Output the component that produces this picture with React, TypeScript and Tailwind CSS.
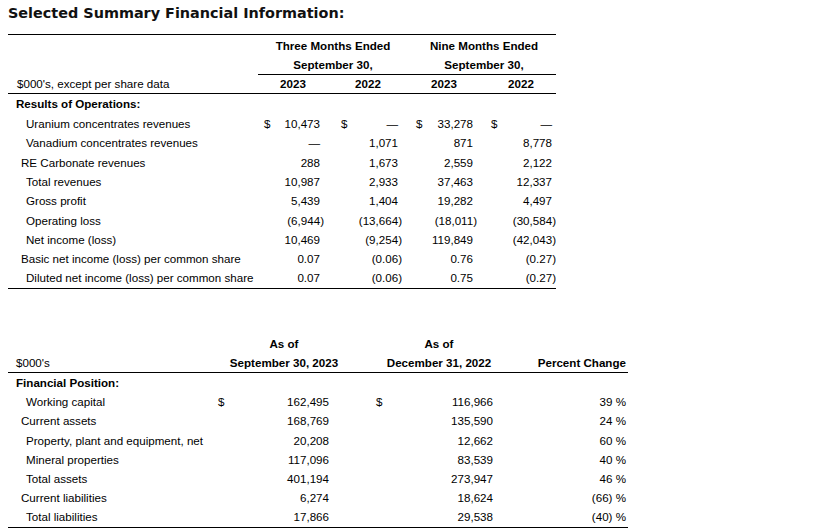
const ops = [
  { label: 'Uranium concentrates revenues', indent: 'pl-[18px]', v: ['10,473', '—', '33,278', '—'], dollar: true },
  { label: 'Vanadium concentrates revenues', indent: 'pl-[18px]', v: ['—', '1,071', '871', '8,778'] },
  { label: 'RE Carbonate revenues', indent: 'pl-[13px]', v: ['288', '1,673', '2,559', '2,122'] },
  { label: 'Total revenues', indent: 'pl-[18px]', v: ['10,987', '2,933', '37,463', '12,337'] },
  { label: 'Gross profit', indent: 'pl-[18px]', v: ['5,439', '1,404', '19,282', '4,497'] },
  { label: 'Operating loss', indent: 'pl-[18px]', v: ['(6,944)', '(13,664)', '(18,011)', '(30,584)'] },
  { label: 'Net income (loss)', indent: 'pl-[18px]', v: ['10,469', '(9,254)', '119,849', '(42,043)'] },
  { label: 'Basic net income (loss) per common share', indent: 'pl-[13px]', v: ['0.07', '(0.06)', '0.76', '(0.27)'] },
  { label: 'Diluted net income (loss) per common share', indent: 'pl-[18px]', v: ['0.07', '(0.06)', '0.75', '(0.27)'] },
];

const position = [
  { label: 'Working capital', indent: 'pl-[18px]', a: '162,495', b: '116,966', p: '39 %', dollar: true },
  { label: 'Current assets', indent: 'pl-[13px]', a: '168,769', b: '135,590', p: '24 %' },
  { label: 'Property, plant and equipment, net', indent: 'pl-[18px]', a: '20,208', b: '12,662', p: '60 %' },
  { label: 'Mineral properties', indent: 'pl-[18px]', a: '117,096', b: '83,539', p: '40 %' },
  { label: 'Total assets', indent: 'pl-[18px]', a: '401,194', b: '273,947', p: '46 %' },
  { label: 'Current liabilities', indent: 'pl-[13px]', a: '6,274', b: '18,624', p: '(66) %' },
  { label: 'Total liabilities', indent: 'pl-[18px]', a: '17,866', b: '29,538', p: '(40) %' },
];

// number with the closing paren hanging past the column edge
function Num({ value }: { value: string }) {
  if (value.endsWith(')')) {
    return (
      <span>
        {value.slice(0, -1)}
        <span className="mr-[-4px]">)</span>
      </span>
    );
  }
  return <span>{value}</span>;
}

const cols1 = [
  { w: 'w-[75px]', pl: 'pl-[6px]', pr: 'pr-[13px]' },
  { w: 'w-[75px]', pl: 'pl-[8px]', pr: 'pr-[10px]' },
  { w: 'w-[75px]', pl: 'pl-[8px]', pr: 'pr-[10px]' },
  { w: 'w-[73px]', pl: 'pl-[8px]', pr: 'pr-[4px]' },
];

export default function App() {
  return (
    <div className="w-[831px] h-[532px] bg-white text-black pl-2 text-[11.6px] font-['Liberation_Sans',Arial,sans-serif] leading-none">
      <h1 className="h-[27px] flex items-center text-[14.4px] font-bold font-['DejaVu_Sans',Verdana,sans-serif] text-[#111]">
        Selected Summary Financial Information:
      </h1>

      {/* operations table */}
      <div className="mt-[7px] w-[548px] border-t-[1.5px] border-b-[1.5px] border-black pt-[1px]">
        <div className="flex h-[19.5px] items-center font-bold">
          <div className="w-[250px]" />
          <div className="w-[150px] text-center">Three Months Ended</div>
          <div className="w-[148px] text-center pl-[4px]">Nine Months Ended</div>
        </div>
        <div className="flex h-[19.5px] font-bold">
          <div className="w-[250px]" />
          <div className="w-[298px] flex items-center border-b-[1.5px] border-black">
            <div className="w-[150px] text-center">September 30,</div>
            <div className="w-[148px] text-center pl-[4px]">September 30,</div>
          </div>
        </div>
        <div className="flex h-[19px] items-center border-b-[1.5px] border-black">
          <div className="w-[250px] pl-[9px]">$000's, except per share data</div>
          <div className="w-[75px] text-center pr-[5px] font-bold">2023</div>
          <div className="w-[75px] text-center pr-[5px] font-bold">2022</div>
          <div className="w-[75px] text-center pr-[3px] font-bold">2023</div>
          <div className="w-[73px] text-center pl-[3px] font-bold">2022</div>
        </div>
        <div className="flex h-[20px] items-center font-bold pl-[8px]">Results of Operations:</div>
        {ops.map((r) => (
          <div key={r.label} className="flex h-[19.33px] items-center">
            <div className={`w-[250px] whitespace-nowrap ${r.indent}`}>{r.label}</div>
            {r.v.map((v, i) => (
              <div key={i} className={`${cols1[i].w} ${cols1[i].pl} ${cols1[i].pr} flex justify-between`}>
                <span>{r.dollar ? '$' : ''}</span>
                <Num value={v} />
              </div>
            ))}
          </div>
        ))}
      </div>

      {/* financial position table */}
      <div className="mt-[45px] w-[620px] border-b-[1.5px] border-black">
        <div className="flex h-[19.5px] items-center font-bold">
          <div className="w-[202px]" />
          <div className="w-[148px] text-center">As of</div>
          <div className="w-[147px] text-center pl-[15px]">As of</div>
          <div className="w-[123px]" />
        </div>
        <div className="flex h-[19.5px] items-center border-b-[1.5px] border-black">
          <div className="w-[202px] pl-[8px]">$000's</div>
          <div className="w-[148px] text-center font-bold">September 30, 2023</div>
          <div className="w-[147px] text-center pl-[15px] font-bold">December 31, 2022</div>
          <div className="w-[123px] text-right pr-[2px] font-bold">Percent Change</div>
        </div>
        <div className="flex h-[19.5px] items-center font-bold pl-[8px]">Financial Position:</div>
        {position.map((r) => (
          <div key={r.label} className="flex h-[19.17px] items-center">
            <div className={`w-[202px] whitespace-nowrap ${r.indent}`}>{r.label}</div>
            <div className="w-[148px] pl-[8px] pr-[29px] flex justify-between">
              <span>{r.dollar ? '$' : ''}</span>
              <span>{r.a}</span>
            </div>
            <div className="w-[147px] pl-[18px] pr-[12px] flex justify-between">
              <span>{r.dollar ? '$' : ''}</span>
              <span>{r.b}</span>
            </div>
            <div className="w-[123px] text-right pr-[2px]">{r.p}</div>
          </div>
        ))}
      </div>
    </div>
  );
}
